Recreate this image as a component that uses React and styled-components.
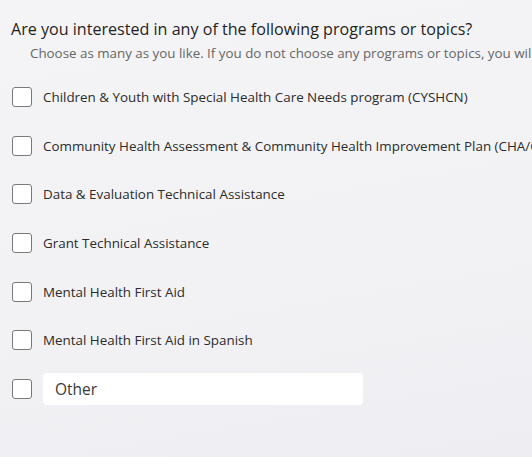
import styled, { createGlobalStyle } from "styled-components";

const GlobalStyle = createGlobalStyle`
  html, body {
    margin: 0;
    padding: 0;
    background: #f3f3f5;
    overflow: hidden;
  }
  body {
    font-family: "Open Sans", "Noto Sans", sans-serif;
  }
`;

const options = [
  "Children & Youth with Special Health Care Needs program (CYSHCN)",
  "Community Health Assessment & Community Health Improvement Plan (CHA/CHIP)",
  "Data & Evaluation Technical Assistance",
  "Grant Technical Assistance",
  "Mental Health First Aid",
  "Mental Health First Aid in Spanish",
];

export default function App() {
  return (
    <>
      <GlobalStyle />
      <Page>
        <Question>Are you interested in any of the following programs or topics?</Question>
        <Hint>
          Choose as many as you like. If you do not choose any programs or topics, you will still
          receive general updates.
        </Hint>
        <List>
          {options.map((opt) => (
            <Row key={opt}>
              <Box type="checkbox" />
              <Label>{opt}</Label>
            </Row>
          ))}
          <Row>
            <Box type="checkbox" />
            <OtherInput placeholder="Other" />
          </Row>
        </List>
      </Page>
    </>
  );
}

const Page = styled.div`
  width: 532px;
  height: 457px;
  box-sizing: border-box;
  padding: 17px 0 0 11px;
  background: linear-gradient(170deg, #f4f4f6 0%, #f2f2f5 60%, #eeeef2 100%);
  overflow: hidden;
`;

const Question = styled.h2`
  margin: 0;
  font-size: 16.1px;
  font-weight: 400;
  color: #1f1f1f;
  white-space: nowrap;
  line-height: 24px;
`;

const Hint = styled.p`
  margin: 3px 0 0 19px;
  font-size: 13.35px;
  color: #666;
  white-space: nowrap;
  line-height: 18px;
`;

const List = styled.div`
  display: flex;
  flex-direction: column;
  gap: 28.7px;
  margin-top: 25px;
`;

const Row = styled.label`
  display: flex;
  align-items: center;
  gap: 11px;
  height: 20px;
  padding-left: 1px;
`;

const Box = styled.input`
  appearance: none;
  margin: 0;
  width: 20px;
  height: 20px;
  flex: none;
  box-sizing: border-box;
  border: 1.5px solid #7a7a7a;
  border-radius: 3px;
  background: #fff;
`;

const Label = styled.span`
  font-size: 13.4px;
  color: #2b2b2b;
  white-space: nowrap;
`;

const OtherInput = styled.input`
  width: 320px;
  height: 32px;
  flex: none;
  box-sizing: border-box;
  border: none;
  border-radius: 4px;
  background: #fff;
  padding: 0 12px;
  font-family: inherit;
  font-size: 15.5px;
  color: #333;
  &::placeholder {
    color: #3a3a3a;
  }
`;
